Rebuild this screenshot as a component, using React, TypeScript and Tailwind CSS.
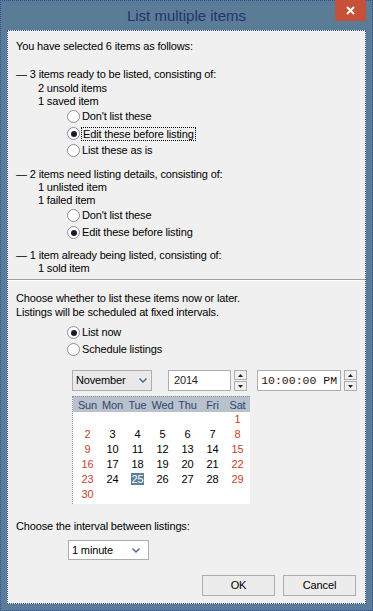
import React from "react";

const Radio = ({ checked, label, focus }: { checked?: boolean; label: string; focus?: boolean }) => (
  <div className="flex items-center h-[17px]">
    <span className="w-[13px] h-[13px] rounded-full border border-[#8e8f8f] bg-white flex items-center justify-center shrink-0">
      {checked && <span className="w-[6px] h-[6px] rounded-full bg-[#1b1b30]" />}
    </span>
    <span
      className={
        focus
          ? "ml-[1px] px-[1px] h-[14px] leading-[12px] border border-dotted border-black"
          : "ml-[2px] leading-[13px]"
      }
    >
      {label}
    </span>
  </div>
);

const Chevron = () => (
  <svg width="8" height="5" viewBox="0 0 8 5">
    <path d="M0.5 0.5 L4 4 L7.5 0.5" fill="none" stroke="#4a6590" strokeWidth="1.4" />
  </svg>
);

const Spinner = () => (
  <div className="flex flex-col gap-[1px] h-[21px] w-[13px]">
    <div className="h-[10px] border border-[#adadad] bg-[#f0f0f0] flex items-center justify-center">
      <svg width="5" height="3" viewBox="0 0 5 3">
        <path d="M0 3 L2.5 0 L5 3Z" fill="#222" />
      </svg>
    </div>
    <div className="h-[10px] border border-[#adadad] bg-[#f0f0f0] flex items-center justify-center">
      <svg width="5" height="3" viewBox="0 0 5 3">
        <path d="M0 0 L2.5 3 L5 0Z" fill="#222" />
      </svg>
    </div>
  </div>
);

const weeks: (number | null)[][] = [
  [null, null, null, null, null, null, 1],
  [2, 3, 4, 5, 6, 7, 8],
  [9, 10, 11, 12, 13, 14, 15],
  [16, 17, 18, 19, 20, 21, 22],
  [23, 24, 25, 26, 27, 28, 29],
  [30, null, null, null, null, null, null],
];
const days = ["Sun", "Mon", "Tue", "Wed", "Thu", "Fri", "Sat"];

export default function App() {
  return (
    <div className="w-[373px] h-[611px] bg-[#5b7c96] border border-dotted border-[#2f4d99] flex flex-col font-['Liberation_Sans',Arial,sans-serif] text-[11px] tracking-[-0.15px] text-black">
      {/* Title bar */}
      <div className="relative h-[29px] flex items-center justify-center">
        <span className="text-[15px] tracking-normal text-[#27336b] leading-[18px] mt-[1px]">List multiple items</span>
        <div className="absolute top-[-1px] right-[6px] w-[31px] h-[21px] bg-[#c6513b] flex items-center justify-center">
          <svg width="9" height="9" viewBox="0 0 9 9">
            <path d="M1 1 L8 8 M8 1 L1 8" stroke="white" strokeWidth="2" />
          </svg>
        </div>
      </div>

      {/* Client area */}
      <div className="mx-[6px] h-[574px] border border-dotted border-[#2f4d99] bg-[#f0f0f0] flex flex-col">
        <div className="px-[8px] flex flex-col">
          <div className="mt-[9px] h-[13px] leading-[13px]">You have selected 6 items as follows:</div>

          <div className="mt-[14px] h-[14px] leading-[14px]">— 3 items ready to be listed, consisting of:</div>
          <div className="pl-[22px] h-[14px] leading-[14px]">2 unsold items</div>
          <div className="pl-[22px] h-[13px] leading-[13px]">1 saved item</div>
          <div className="pl-[51px] flex flex-col">
            <Radio label="Don't list these" />
            <Radio label="Edit these before listing" checked focus />
            <Radio label="List these as is" />
          </div>

          <div className="mt-[8px] h-[14px] leading-[14px]">— 2 items need listing details, consisting of:</div>
          <div className="pl-[22px] h-[13px] leading-[13px]">1 unlisted item</div>
          <div className="pl-[22px] h-[13px] leading-[13px]">1 failed item</div>
          <div className="pl-[51px] flex flex-col">
            <Radio label="Don't list these" />
            <Radio label="Edit these before listing" checked />
          </div>

          <div className="mt-[7px] h-[14px] leading-[14px]">— 1 item already being listed, consisting of:</div>
          <div className="pl-[22px] h-[13px] leading-[13px]">1 sold item</div>
        </div>

        <div className="mt-[4px] h-[2px] border-t border-[#a0a0a0] border-b border-b-white" />

        <div className="px-[8px] flex flex-col">
          <div className="mt-[10px] h-[14px] leading-[14px]">Choose whether to list these items now or later.</div>
          <div className="h-[14px] leading-[14px]">Listings will be scheduled at fixed intervals.</div>
          <div className="pl-[51px] mt-[5px] flex flex-col">
            <Radio label="List now" checked />
            <Radio label="Schedule listings" />
          </div>

          {/* Date / time controls */}
          <div className="mt-[12px] ml-[56px] flex items-start">
            <div className="w-[81px] h-[21px] border border-[#adadad] bg-[#e9e9e9] flex items-center justify-between pl-[3px] pr-[4px]">
              <span>November</span>
              <Chevron />
            </div>
            <div className="ml-[16px] w-[64px] h-[21px] border border-[#abadb3] bg-white flex items-center pl-[5px] text-[#2a1c1c]">
              2014
            </div>
            <div className="ml-[3px]">
              <Spinner />
            </div>
            <div className="ml-[10px] w-[85px] h-[21px] border border-[#abadb3] bg-white flex items-center pl-[3px] font-['Liberation_Mono',monospace] text-[11.5px] tracking-normal text-[#2a1414]">
              10:00:00 PM
            </div>
            <div className="ml-[3px]">
              <Spinner />
            </div>
          </div>

          {/* Calendar */}
          <div className="mt-[5px] ml-[56px] w-[178px] bg-white border-l border-dotted border-[#8a96a8] pb-[2px]">
            <div className="h-[16px] bg-[#b8c1cc] border-t border-dotted border-[#8a96a8] pl-[2px] grid grid-cols-[repeat(7,25px)] items-center text-[#31466f] leading-[14px]">
              {days.map((d) => (
                <div key={d} className="text-center">{d}</div>
              ))}
            </div>
            {weeks.map((w, i) => (
              <div key={i} className="h-[15px] pl-[2px] grid grid-cols-[repeat(7,25px)] items-center leading-[13px]">
                {w.map((d, j) => (
                  <div
                    key={j}
                    className={
                      "text-center " + (j === 0 || j === 6 ? "text-[#c2432a]" : "text-black")
                    }
                  >
                    {d === 25 ? (
                      <span className="inline-block px-[1px] h-[12px] leading-[12px] bg-[#5d7f97] text-white">25</span>
                    ) : (
                      d ?? ""
                    )}
                  </div>
                ))}
              </div>
            ))}
          </div>

          <div className="mt-[15px] h-[14px] leading-[14px]">Choose the interval between listings:</div>
          <div className="mt-[7px] ml-[52px] w-[81px] h-[20px] border border-[#adadad] bg-white flex items-center justify-between pl-[3px] pr-[8px]">
            <span>1 minute</span>
            <Chevron />
          </div>

          <div className="mt-[15px] mr-[1px] flex justify-end gap-[8px]">
            <div className="w-[73px] h-[21px] border border-[#adadad] bg-[#ececec] flex items-center justify-center">
              OK
            </div>
            <div className="w-[73px] h-[21px] border border-[#adadad] bg-[#ececec] flex items-center justify-center">
              Cancel
            </div>
          </div>
        </div>
      </div>
    </div>
  );
}
